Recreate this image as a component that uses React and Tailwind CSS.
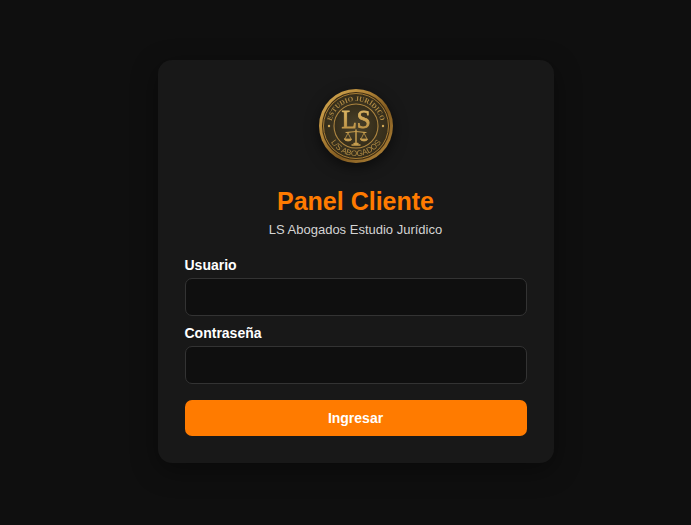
const LOGO_FONT = '"Liberation Serif", serif';
const RING_FONT = '"Liberation Sans", Arial, sans-serif';

function Logo() {
  return (
    <svg
      viewBox="0 0 78 78"
      role="img"
      aria-label="LS Abogados"
      className="mx-auto size-[78px] drop-shadow-[0_4px_7px_rgba(0,0,0,0.55)]"
    >
      <defs>
        <linearGradient id="rim" x1="0" y1="0" x2="1" y2="1">
          <stop offset="0" stopColor="#d9ae55" />
          <stop offset="0.35" stopColor="#b08336" />
          <stop offset="0.6" stopColor="#80591f" />
          <stop offset="1" stopColor="#b98b3c" />
        </linearGradient>
        <linearGradient id="gold" x1="0" y1="0" x2="0" y2="1">
          <stop offset="0" stopColor="#e0bb69" />
          <stop offset="1" stopColor="#b98d40" />
        </linearGradient>
        <radialGradient id="face">
          <stop offset="0" stopColor="#4a412a" />
          <stop offset="1" stopColor="#352d1a" />
        </radialGradient>
        <path id="arc-top" d="M14 39a25 25 0 0 1 50 0a25 25 0 0 1-50 0" />
        <path id="arc-bottom" d="M9 39a30 30 0 0 0 60 0" />
      </defs>

      <circle cx="39" cy="39" r="37" fill="url(#rim)" />
      <circle cx="39" cy="39" r="34" fill="#3a2b14" />
      <circle cx="39" cy="39" r="32.5" fill="url(#face)" stroke="#a67c35" strokeWidth="1" />
      <circle cx="39" cy="39" r="22" fill="url(#face)" stroke="#ad8540" strokeWidth="1.1" />

      <g fill="#b18b44" textAnchor="middle">
        <text fontFamily={LOGO_FONT} fontSize="7" fontWeight="700">
          <textPath href="#arc-top" startOffset="25%">ESTUDIO JURÍDICO</textPath>
        </text>
        <text fontFamily={RING_FONT} fontSize="8">
          <textPath href="#arc-bottom" startOffset="50%">L/S ABOGADOS</textPath>
        </text>
      </g>
      <circle cx="12" cy="39" r="1.2" fill="#d0a757" />
      <circle cx="66" cy="39" r="1.2" fill="#d0a757" />

      <text
        x="39"
        y="41"
        textAnchor="middle"
        fontFamily={LOGO_FONT}
        fontSize="25"
        fill="url(#gold)"
        stroke="url(#gold)"
        strokeWidth="0.8"
      >
        LS
      </text>

      <g fill="none" stroke="#c69d4e" strokeLinecap="round" strokeWidth="0.8">
        <path d="M39 43v14" strokeWidth="1.5" />
        <path d="M29 45.5c4 0 6-1 10-1s6 1 10 1" strokeWidth="1.2" />
        <path d="M31 46l-3 6M31 46l3 6M47 46l-3 6M47 46l3 6" />
        <path d="M27.5 52h7a3.5 2 0 0 1-7 0zM43.5 52h7a3.5 2 0 0 1-7 0z" fill="#c69d4e" />
        <path d="M35 58h8M37 56.5h4" strokeWidth="1.4" />
      </g>
    </svg>
  );
}

function Field({ id, label, type, autoComplete }) {
  return (
    <div>
      <label htmlFor={id} className="block text-sm leading-5 font-bold text-white">
        {label}
      </label>
      <input
        id={id}
        name={id}
        type={type}
        autoComplete={autoComplete}
        className="mt-[3px] block h-[38px] w-full rounded-[7px] border border-[#333] bg-[#0f0f0f] px-3 text-sm text-white outline-none focus:border-[#ff7b00]"
      />
    </div>
  );
}

export default function App() {
  return (
    <main className="flex min-h-screen items-center justify-center bg-[#0f0f0f] pb-0.5 pl-5 font-['Liberation_Sans',Arial,sans-serif]">
      <section className="w-full max-w-[396px] rounded-[14px] bg-[#181818] p-[27px] shadow-[0_7px_27px_rgba(0,0,0,0.4)]">
        <header className="text-center">
          <Logo />
          <h1 className="mt-5 text-[25px] leading-8 font-bold text-[#ff7b00]">Panel Cliente</h1>
          <p className="mt-0.5 text-[13px] leading-[22px] text-[#d4d4d4]">
            LS Abogados Estudio Jurídico
          </p>
        </header>

        <form className="mt-3.5" onSubmit={(e) => e.preventDefault()}>
          <div className="flex flex-col gap-[7px]">
            <Field id="usuario" label="Usuario" type="text" autoComplete="username" />
            <Field
              id="contrasena"
              label="Contraseña"
              type="password"
              autoComplete="current-password"
            />
          </div>
          <button
            type="submit"
            className="mt-4 h-9 w-full cursor-pointer rounded-[7px] bg-[#ff7b00] text-sm font-bold text-white hover:bg-[#ff8f26]"
          >
            Ingresar
          </button>
        </form>
      </section>
    </main>
  );
}
